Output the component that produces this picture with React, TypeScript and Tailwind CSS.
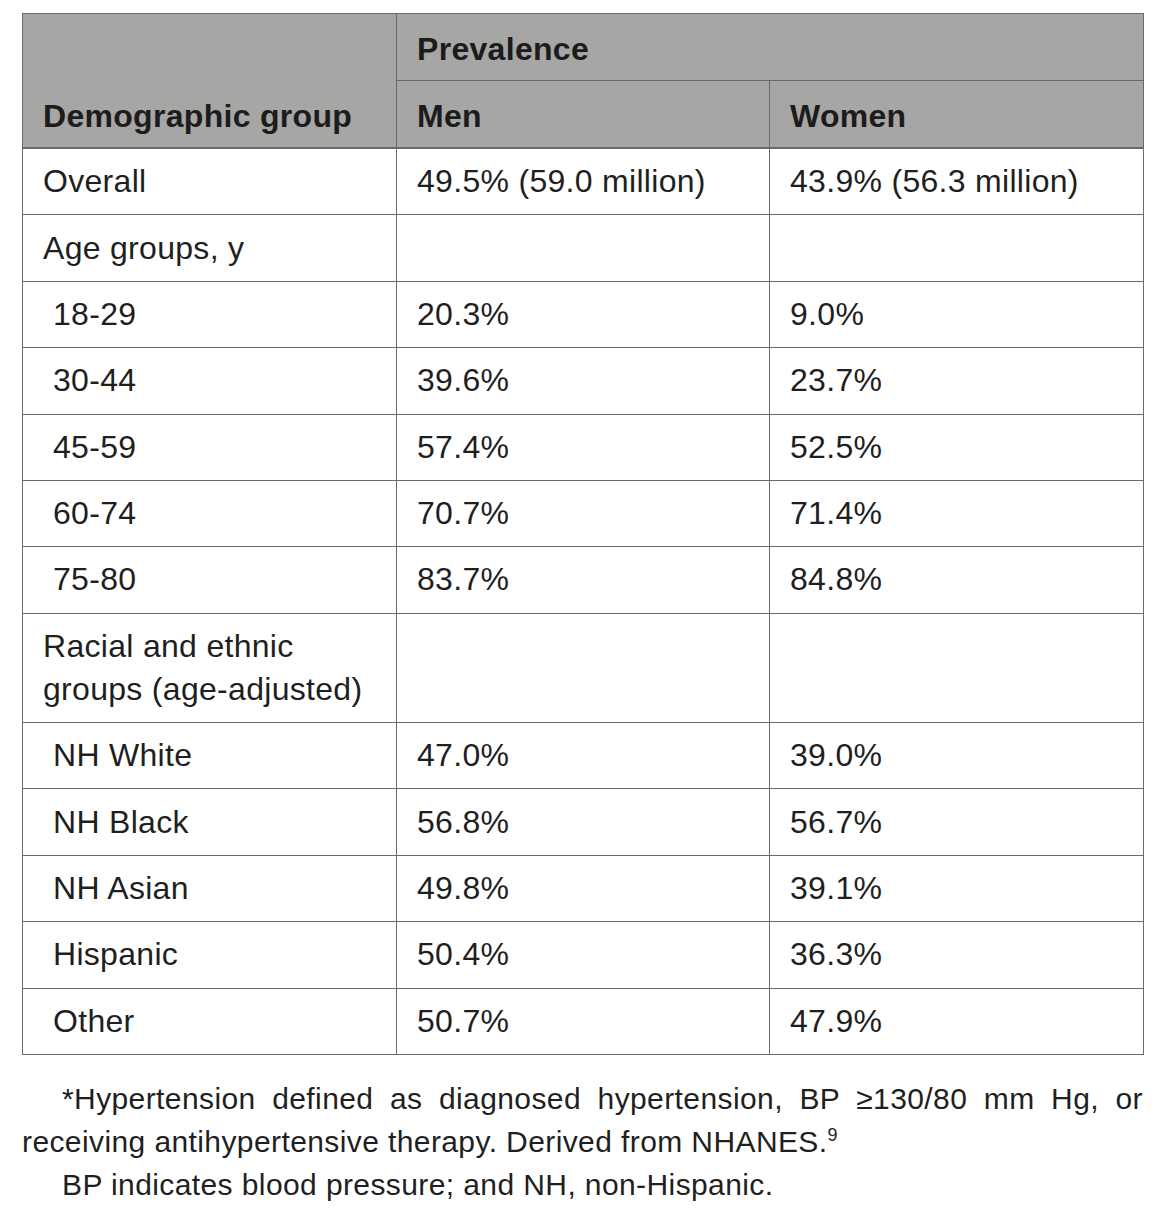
import React from 'react';

type Row = { label: string; men?: string; women?: string; sub?: boolean };

const rows: Row[] = [
  { label: 'Overall', men: '49.5% (59.0 million)', women: '43.9% (56.3 million)' },
  { label: 'Age groups, y' },
  { label: '18-29', men: '20.3%', women: '9.0%', sub: true },
  { label: '30-44', men: '39.6%', women: '23.7%', sub: true },
  { label: '45-59', men: '57.4%', women: '52.5%', sub: true },
  { label: '60-74', men: '70.7%', women: '71.4%', sub: true },
  { label: '75-80', men: '83.7%', women: '84.8%', sub: true },
  { label: 'Racial and ethnic groups (age-adjusted)' },
  { label: 'NH White', men: '47.0%', women: '39.0%', sub: true },
  { label: 'NH Black', men: '56.8%', women: '56.7%', sub: true },
  { label: 'NH Asian', men: '49.8%', women: '39.1%', sub: true },
  { label: 'Hispanic', men: '50.4%', women: '36.3%', sub: true },
  { label: 'Other', men: '50.7%', women: '47.9%', sub: true },
];

const cell = 'border border-[#6b6b6b] px-[20px] py-[11.2px] align-middle';
const head = 'border border-[#6b6b6b] px-[20px] pb-[9px] pt-[14px] align-bottom font-bold text-[#1c1c1c] text-[32px]';

export default function App() {
  return (
    <div className="bg-white min-h-[1216px] pt-[13px] text-[#1f1f1f] font-['Liberation_Sans',Arial,sans-serif]">
      <table className="ml-[22px] w-[1121px] table-fixed border-collapse text-[32px] leading-[43px] tracking-[0.3px]">
        <colgroup>
          <col className="w-[374px]" />
          <col className="w-[373px]" />
          <col className="w-[374px]" />
        </colgroup>
        <thead className="bg-[#a6a6a4]">
          <tr>
            <th rowSpan={2} className={`${head} text-left border-b-2`}>
              Demographic group
            </th>
            <th colSpan={2} className={`${head} text-left`}>
              Prevalence
            </th>
          </tr>
          <tr>
            <th className={`${head} text-left border-b-2`}>Men</th>
            <th className={`${head} text-left border-b-2`}>Women</th>
          </tr>
        </thead>
        <tbody>
          {rows.map((r) => (
            <tr key={r.label}>
              <td className={`${cell} ${r.sub ? 'pl-[30px]' : ''}`}>
                {r.label === 'Racial and ethnic groups (age-adjusted)' ? (
                  <>
                    Racial and ethnic
                    <br />
                    groups (age-adjusted)
                  </>
                ) : (
                  r.label
                )}
              </td>
              <td className={cell}>{r.men ?? ''}</td>
              <td className={cell}>{r.women ?? ''}</td>
            </tr>
          ))}
        </tbody>
      </table>
      <div className="ml-[22px] mt-[22px] w-[1121px] text-[30px] leading-[43px] tracking-[0.4px] text-[#1f1f1f]">
        <p className="indent-[40px] text-justify">
          *Hypertension defined as diagnosed hypertension, BP ≥130/80 mm Hg, or receiving antihypertensive
          therapy. Derived from NHANES.
          <span className="align-[11px] text-[18px] leading-none">9</span>
        </p>
        <p className="indent-[40px]">BP indicates blood pressure; and NH, non-Hispanic.</p>
      </div>
    </div>
  );
}
